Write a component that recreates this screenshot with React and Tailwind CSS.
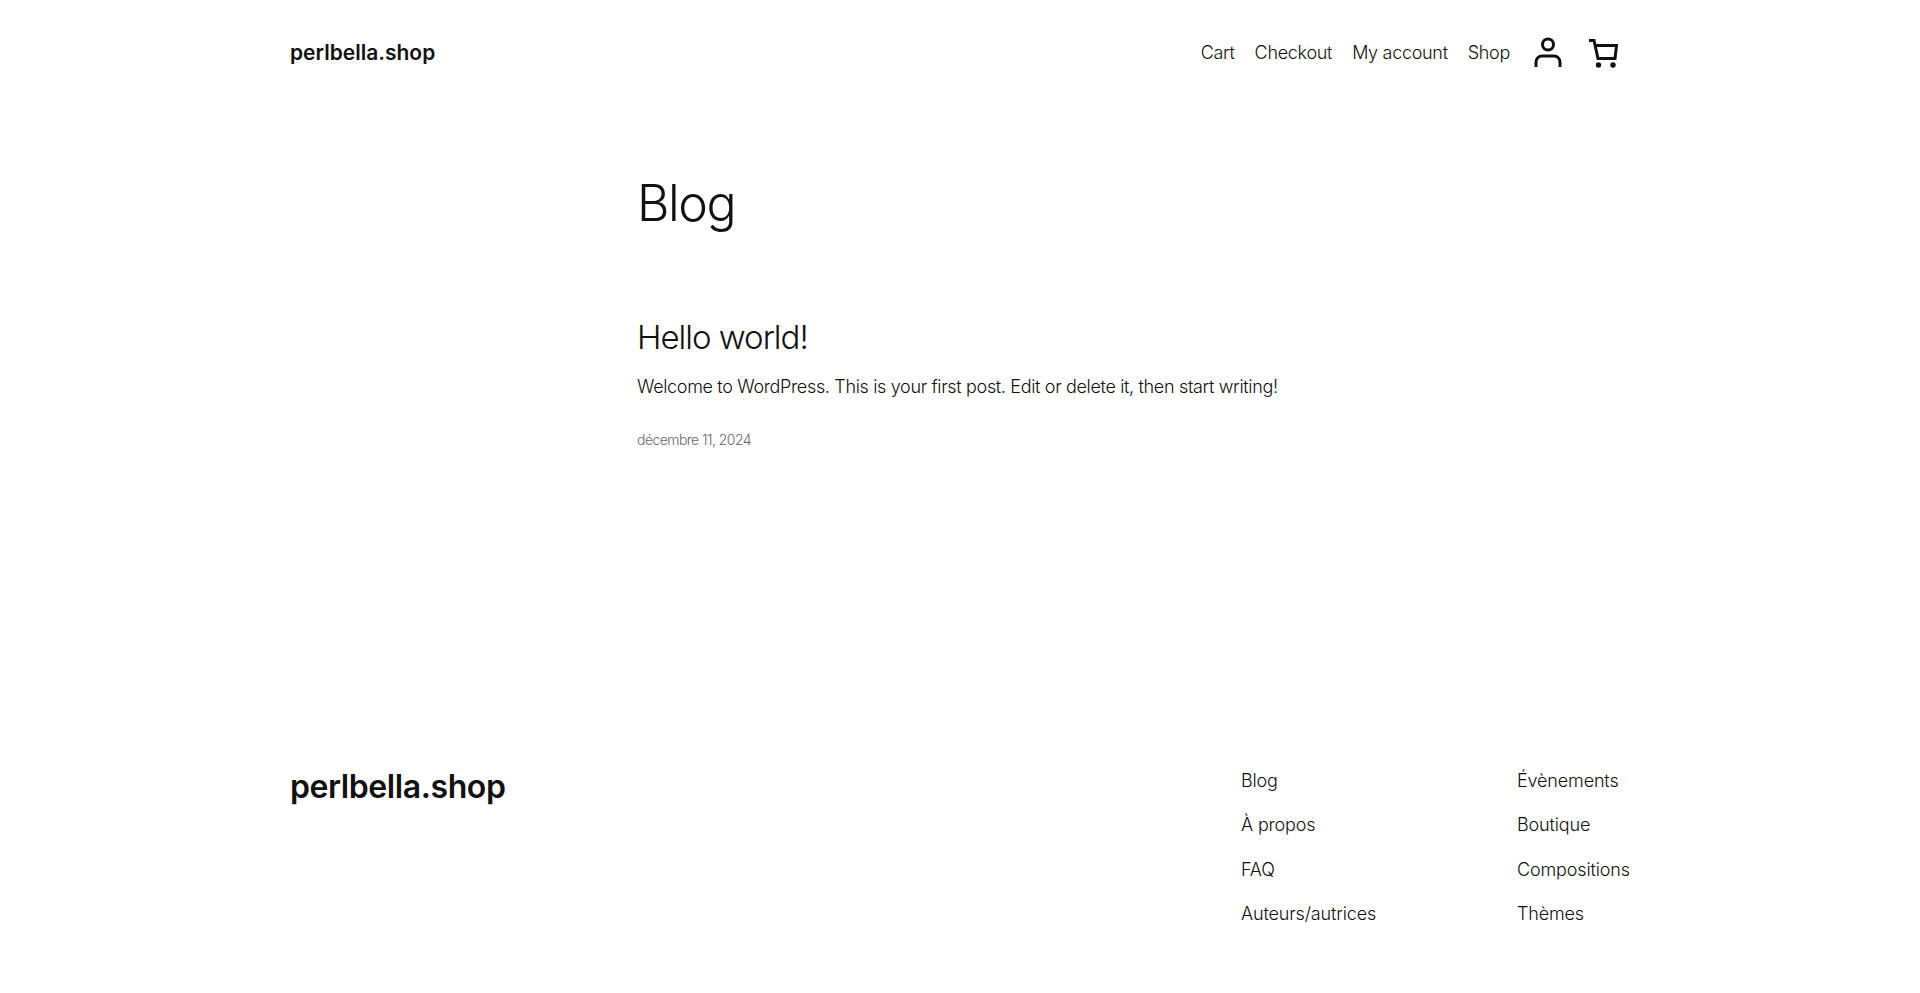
const navLinks = ["Cart", "Checkout", "My account", "Shop"];
const footerCols = [
  { x: "w-[276px]", links: ["Blog", "À propos", "FAQ", "Auteurs/autrices"] },
  { x: "w-[113px]", links: ["Évènements", "Boutique", "Compositions", "Thèmes"] },
];

function UserIcon() {
  return (
    <svg width="38" height="38" viewBox="0 0 38 38" fill="none" stroke="#111" strokeWidth="3">
      <circle cx="19" cy="10.5" r="5.5" />
      <path d="M7 33v-5a6 6 0 0 1 6-6h12a6 6 0 0 1 6 6v5" />
    </svg>
  );
}

function CartIcon() {
  return (
    <svg width="38" height="38" viewBox="0 0 38 38" fill="none" stroke="#111" strokeWidth="3">
      <path d="M5 6.500h5L14 24.500h17l1.500-13H11.500" />
      <circle cx="14.500" cy="31" r="2.700" fill="#111" stroke="none" />
      <circle cx="29" cy="31" r="2.700" fill="#111" stroke="none" />
    </svg>
  );
}

export default function App() {
  return (
    <div className="min-h-[993px] bg-white font-['Inter',sans-serif] text-[#111111]">
      {/* Header */}
      <header className="mx-auto flex h-[106px] w-[1340px] items-center justify-between">
        <a className="text-[21px] font-semibold">perlbella.shop</a>
        <nav className="mr-[8px] flex items-center gap-[20px]">
          {navLinks.map((link) => (
            <a key={link} className="-mt-[1px] text-[18px] font-light tracking-[-0.3px]">
              {link}
            </a>
          ))}
          <div className="-ml-[1px] flex items-center gap-[17px]">
            <UserIcon />
            <CartIcon />
          </div>
        </nav>
      </header>

      {/* Posts */}
      <main className="mx-auto w-[646px]">
        <h1 className="mt-[62px] text-[50px] leading-[70px] font-light tracking-[-1.4px]">Blog</h1>
        <h2 className="mt-[77px] text-[33px] leading-[44px] font-light tracking-[-1px]">Hello world!</h2>
        <p className="mt-[14px] text-[18px] leading-[28px] font-light tracking-[-0.34px]">
          Welcome to WordPress. This is your first post. Edit or delete it, then start writing!
        </p>
        <p className="mt-[29px] text-[14px] leading-[20px] font-light tracking-[-0.55px] text-[#666666]">
          décembre 11, 2024
        </p>
      </main>

      {/* Footer */}
      <footer className="mx-auto mt-[314px] flex w-[1340px] items-start justify-between">
        <a className="mt-[1px] text-[32px] leading-[44px] font-semibold tracking-[-0.42px]">perlbella.shop</a>
        <div className="flex pt-[3px]">
          {footerCols.map((col) => (
            <ul key={col.links[0]} className={`${col.x} flex flex-col gap-[16px]`}>
              {col.links.map((link) => (
                <li key={link} className="text-[18px] leading-[28.4px] font-light tracking-[-0.15px] whitespace-nowrap">
                  {link}
                </li>
              ))}
            </ul>
          ))}
        </div>
      </footer>
    </div>
  );
}
